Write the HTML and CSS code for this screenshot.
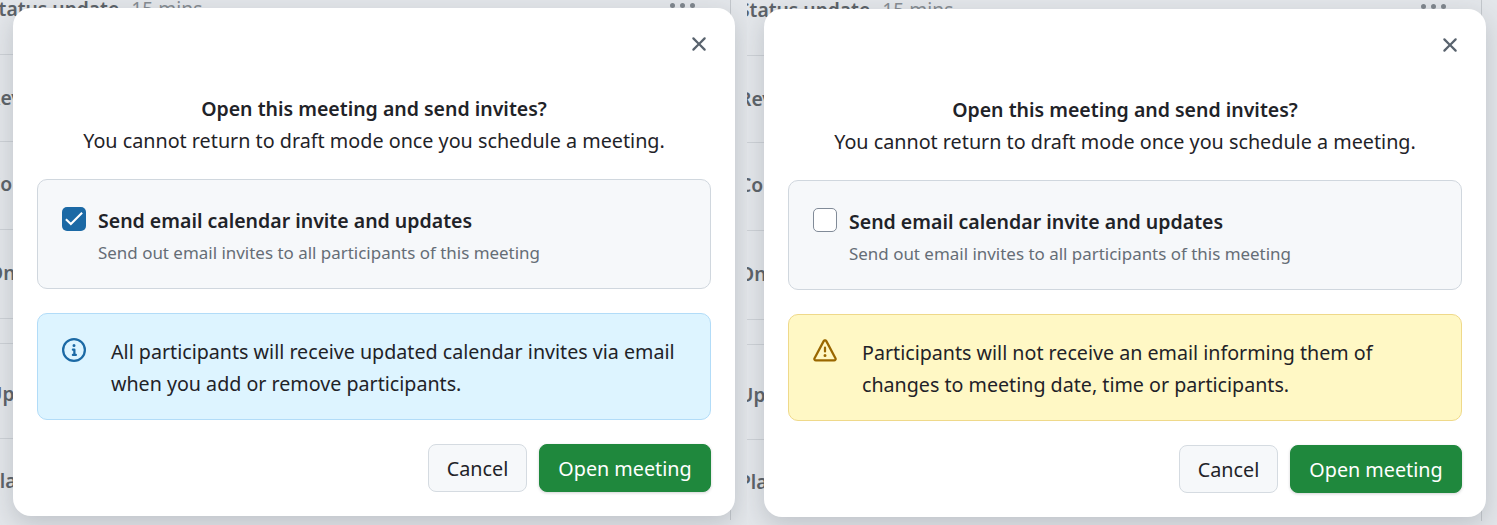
FILE: index.html
```html
<!DOCTYPE html>
<html lang="en">
<head>
<meta charset="utf-8">
<title>Open meeting</title>
<link rel="stylesheet" href="styles.css">
</head>
<body>
<main class="stage">
  <section class="screen screen-a">
    <div class="panel">
      <div class="row row-1"><span class="row-title">Status update</span><span class="row-time">15 mins</span><span class="dots"><i></i><i></i><i></i></span></div>
      <div class="row row-2"><span class="row-title">Review</span></div>
      <div class="row row-3"><span class="row-title">Confirm</span></div>
      <div class="row row-4"><span class="row-title">Onboard</span></div>
      <div class="row row-5"></div>
      <div class="row row-6"><span class="row-title">Updates</span></div>
      <div class="row row-7"><span class="row-title">Planning</span></div>
    </div>
    <div class="dialog">
      <div class="dialog-head">
        <svg class="icon close" viewBox="0 0 16 16"><path d="M3.72 3.72a.75.75 0 0 1 1.06 0L8 6.94l3.22-3.22a.749.749 0 0 1 1.275.326.749.749 0 0 1-.215.734L9.06 8l3.22 3.22a.749.749 0 0 1-.326 1.275.749.749 0 0 1-.734-.215L8 9.06l-3.22 3.22a.751.751 0 0 1-1.042-.018.751.751 0 0 1-.018-1.042L6.94 8 3.72 4.78a.75.75 0 0 1 0-1.06Z"/></svg>
      </div>
      <div class="intro">
        <div class="intro-title">Open this meeting and send invites?</div>
        <div class="intro-sub">You cannot return to draft mode once you schedule a meeting.</div>
      </div>
      <div class="card">
        <span class="check check-on">
          <svg viewBox="0 0 16 16"><path d="M2.6 8.2 5.9 11.3 13.4 3.8"/></svg>
        </span>
        <div>
          <div class="card-title">Send email calendar invite and updates</div>
          <div class="card-note">Send out email invites to all participants of this meeting</div>
        </div>
      </div>
      <div class="alert alert-info">
        <svg class="icon" viewBox="0 0 16 16"><path d="M0 8a8 8 0 1 1 16 0A8 8 0 0 1 0 8Zm8-6.5a6.5 6.5 0 1 0 0 13 6.5 6.5 0 0 0 0-13ZM6.5 7.75A.75.75 0 0 1 7.25 7h1a.75.75 0 0 1 .75.75v2.75h.25a.75.75 0 0 1 0 1.5h-2a.75.75 0 0 1 0-1.5h.25v-2h-.25a.75.75 0 0 1-.75-.75ZM8 6a1 1 0 1 1 0-2 1 1 0 0 1 0 2Z"/></svg>
        <p>All participants will receive updated calendar invites via email<br>when you add or remove participants.</p>
      </div>
      <div class="actions">
        <button class="btn btn-cancel">Cancel</button>
        <button class="btn btn-open">Open meeting</button>
      </div>
    </div>
  </section>
  <section class="screen screen-b">
    <div class="panel">
      <div class="row row-1"><span class="row-title">Status update</span><span class="row-time">15 mins</span><span class="dots"><i></i><i></i><i></i></span></div>
      <div class="row row-2"><span class="row-title">Review</span></div>
      <div class="row row-3"><span class="row-title">Confirm</span></div>
      <div class="row row-4"><span class="row-title">Onboard</span></div>
      <div class="row row-5"></div>
      <div class="row row-6"><span class="row-title">Updates</span></div>
      <div class="row row-7"><span class="row-title">Planning</span></div>
    </div>
    <div class="dialog">
      <div class="dialog-head">
        <svg class="icon close" viewBox="0 0 16 16"><path d="M3.72 3.72a.75.75 0 0 1 1.06 0L8 6.94l3.22-3.22a.749.749 0 0 1 1.275.326.749.749 0 0 1-.215.734L9.06 8l3.22 3.22a.749.749 0 0 1-.326 1.275.749.749 0 0 1-.734-.215L8 9.06l-3.22 3.22a.751.751 0 0 1-1.042-.018.751.751 0 0 1-.018-1.042L6.94 8 3.72 4.78a.75.75 0 0 1 0-1.06Z"/></svg>
      </div>
      <div class="intro">
        <div class="intro-title">Open this meeting and send invites?</div>
        <div class="intro-sub">You cannot return to draft mode once you schedule a meeting.</div>
      </div>
      <div class="card">
        <span class="check"></span>
        <div>
          <div class="card-title">Send email calendar invite and updates</div>
          <div class="card-note">Send out email invites to all participants of this meeting</div>
        </div>
      </div>
      <div class="alert alert-warn">
        <svg class="icon" viewBox="0 0 16 16"><path d="M6.457 1.047c.659-1.234 2.427-1.234 3.086 0l6.082 11.378A1.75 1.75 0 0 1 14.082 15H1.918a1.75 1.75 0 0 1-1.543-2.575Zm1.763.707a.25.25 0 0 0-.44 0L1.698 13.132a.25.25 0 0 0 .22.368h12.164a.25.25 0 0 0 .22-.368Zm.53 3.996v2.5a.75.75 0 0 1-1.5 0v-2.5a.75.75 0 0 1 1.5 0ZM9 11a1 1 0 1 1-2 0 1 1 0 0 1 2 0Z"/></svg>
        <p>Participants will not receive an email informing them of<br>changes to meeting date, time or participants.</p>
      </div>
      <div class="actions">
        <button class="btn btn-cancel">Cancel</button>
        <button class="btn btn-open">Open meeting</button>
      </div>
    </div>
  </section>
</main>
</body>
</html>
```
FILE: styles.css
```css
* { box-sizing: border-box; }
html, body { margin: 0; height: 100%; overflow: hidden; }
body { font-family: "Noto Sans", "Open Sans", sans-serif; color: #1f2328; background: #e3e6ea; }

.stage { display: flex; width: 1497px; height: 525px; }
.screen { position: relative; overflow: hidden; height: 525px; background: #e3e6ea; }
.screen-a { width: 747px; }
.screen-b { width: 750px; }

.panel { width: 735px; height: 525px; border-right: 1px solid #c3c7cc; }
.screen-a .panel { margin-left: -4px; }
.screen-b .panel { margin-top: 1px; }

.row { display: flex; align-items: center; position: relative; border-bottom: 1px solid #cdd1d6; font-size: 19.3px; color: #5c6268; white-space: nowrap; }
.row-title { font-weight: 600; margin-left: -8px; }
.row-time { margin-left: 12px; color: #858b91; }
.row-1 { align-items: flex-start; margin-top: -5px; height: 60px; }
.row-2 { height: 87px; padding-bottom: 2px; }
.row-3 { height: 88px; padding-bottom: 4px; }
.row-4 { height: 89px; padding-bottom: 4px; }
.row-5 { height: 25px; }
.row-6 { height: 95px; padding-top: 4px; }
.row-7 { height: 87px; border-bottom: 0; padding-bottom: 4px; }

.dots { display: flex; gap: 5px; margin-left: auto; margin-right: 35px; padding-top: 8px; }
.dots i { width: 5px; height: 5px; border-radius: 50%; background: #7f868d; }

.dialog { position: absolute; left: 13px; top: 8px; width: 722px; height: 508px; padding: 24px; background: #fff; border-radius: 18px; box-shadow: 0 8px 24px rgba(66, 74, 83, .22); }
.screen-b .dialog { left: 17px; top: 9px; }

.dialog-head { display: flex; justify-content: flex-end; margin-bottom: 37px; height: 24px; }
.icon { width: 24px; height: 24px; flex: none; fill: currentColor; display: block; }
.close { color: #59636e; }

.intro { text-align: center; font-size: 19.75px; line-height: 32px; margin-bottom: 22px; }
.intro-title { font-weight: 600; font-size: 19.5px; }

.card { display: flex; gap: 12px; height: 110px; padding: 27px 24px 0; background: #f6f8fa; border: 1px solid #d0d7de; border-radius: 10px; margin-bottom: 24px; }
.check { width: 24px; height: 24px; flex: none; background: #fff; border: 1px solid #818b98; border-radius: 5px; }
.check-on { background: #1b69a5; border: 0; }
.check-on svg { display: block; width: 24px; height: 24px; fill: none; stroke: #fff; stroke-width: 1.4; }
.card-title { font-size: 19.5px; font-weight: 600; line-height: 30px; margin-top: -1px; }
.card-note { font-size: 16.95px; color: #656d76; line-height: 32px; margin-top: 1px; }

.alert { display: flex; gap: 25px; height: 107px; padding: 24px 24px 0; border: 1px solid; border-radius: 10px; margin-bottom: 24px; }
.alert p { margin: -2px 0 0; font-size: 19.66px; line-height: 32px; }
.alert-info { background: #ddf4ff; border-color: #b2dcf8; }
.alert-info .icon { color: #1b69a5; }
.alert-warn { background: #fff8c5; border-color: #efd98a; }
.alert-warn .icon { color: #9a6700; }

.actions { display: flex; justify-content: flex-end; gap: 12px; }
.btn { height: 48px; padding: 0; border: 1px solid; border-radius: 8px; font-family: inherit; font-size: 19.75px; line-height: 48px; }
.btn-cancel { width: 99px; background: #f6f8fa; border-color: #d5dbe1; color: #1f2328; }
.btn-open { width: 172px; background: #1f883d; border-color: #1f883d; color: #fff; box-shadow: 0 1px 3px rgba(31, 35, 40, .2); }
```
